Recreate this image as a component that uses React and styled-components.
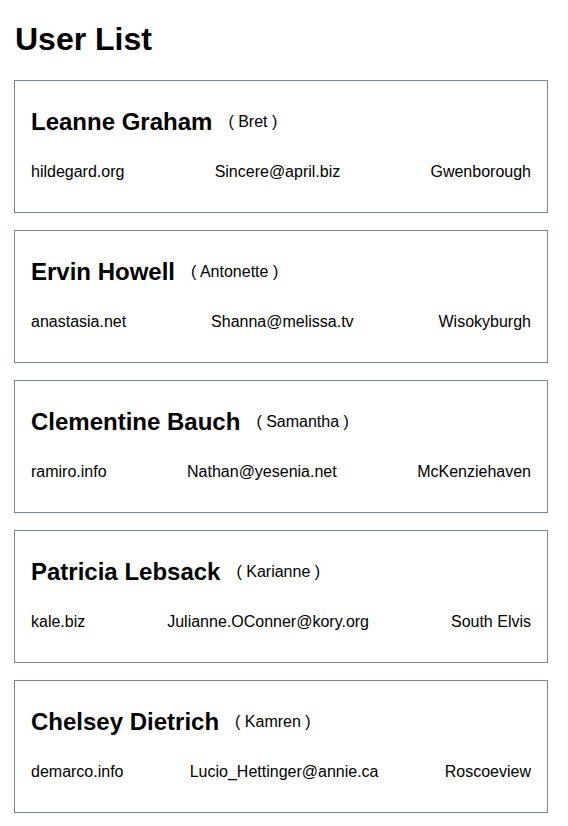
import React from "react";
import styled, { createGlobalStyle } from "styled-components";

const users = [
  { name: "Leanne Graham", username: "Bret", website: "hildegard.org", email: "Sincere@april.biz", city: "Gwenborough" },
  { name: "Ervin Howell", username: "Antonette", website: "anastasia.net", email: "Shanna@melissa.tv", city: "Wisokyburgh" },
  { name: "Clementine Bauch", username: "Samantha", website: "ramiro.info", email: "Nathan@yesenia.net", city: "McKenziehaven" },
  { name: "Patricia Lebsack", username: "Karianne", website: "kale.biz", email: "Julianne.OConner@kory.org", city: "South Elvis" },
  { name: "Chelsey Dietrich", username: "Kamren", website: "demarco.info", email: "Lucio_Hettinger@annie.ca", city: "Roscoeview" },
];

const GlobalStyle = createGlobalStyle`
  body {
    margin: 0;
    background: #ffffff;
    font-family: "Liberation Sans", Arial, sans-serif;
    color: #000000;
  }
`;

const App = () => {
  return (
    <Page>
      <GlobalStyle />
      <Title>User List</Title>
      <List>
        {users.map((user) => (
          <Card key={user.username}>
            <Header>
              <Name>{user.name}</Name>
              <Username>( {user.username} )</Username>
            </Header>
            <Info>
              <span>{user.website}</span>
              <span>{user.email}</span>
              <span>{user.city}</span>
            </Info>
          </Card>
        ))}
      </List>
    </Page>
  );
};

const Page = styled.div`
  padding: 21px 20px 12px 14px;
`;

const Title = styled.h1`
  margin: 0 0 22px 1px;
  font-size: 32px;
  font-weight: bold;
  line-height: 37px;
`;

const List = styled.div`
  display: flex;
  flex-direction: column;
  gap: 17px;
`;

const Card = styled.div`
  border: 1px solid #778899;
  padding: 27px 16px 31px 16px;
`;

const Header = styled.div`
  display: flex;
  align-items: center;
  gap: 16px;
`;

const Name = styled.h2`
  margin: 0;
  font-size: 24px;
  font-weight: bold;
  line-height: 28px;
`;

const Username = styled.span`
  font-size: 16px;
  line-height: 18px;
`;

const Info = styled.div`
  display: flex;
  justify-content: space-between;
  margin-top: 27px;
  font-size: 16px;
  line-height: 18px;
`;

export default App;
